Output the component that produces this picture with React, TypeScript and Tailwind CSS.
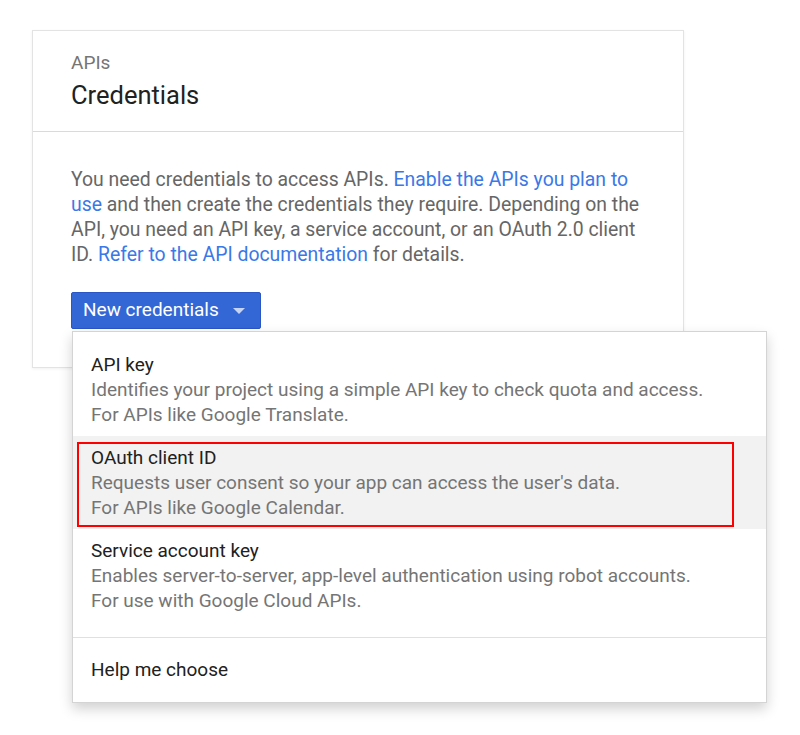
const font = { fontFamily: "Roboto, 'Liberation Sans', sans-serif" };

const options = [
  {
    title: "API key",
    lines: [
      "Identifies your project using a simple API key to check quota and access.",
      "For APIs like Google Translate.",
    ],
    active: false,
  },
  {
    title: "OAuth client ID",
    lines: [
      "Requests user consent so your app can access the user's data.",
      "For APIs like Google Calendar.",
    ],
    active: true,
  },
  {
    title: "Service account key",
    lines: [
      "Enables server-to-server, app-level authentication using robot accounts.",
      "For use with Google Cloud APIs.",
    ],
    active: false,
  },
];

function CredentialsMenu() {
  return (
    <div className="absolute left-px top-[39px] z-10 w-[695px] border border-[#d4d4d4] bg-white shadow-[0_6px_12px_rgba(0,0,0,0.18)]">
      <div className="pt-[11px] pb-[15px]">
        {options.map((o) => (
          <div
            key={o.title}
            className={`relative px-[18px] py-[9px] text-[19px] leading-[25px] ${o.active ? "bg-[#f2f2f2]" : ""}`}
          >
            {o.active && (
              <div className="pointer-events-none absolute left-[4px] top-[6px] h-[85px] w-[657px] border-2 border-[#ff0000]" />
            )}
            <div className="text-[#212121]">{o.title}</div>
            {o.lines.map((l) => (
              <div key={l} className="text-[#757575]">
                {l}
              </div>
            ))}
          </div>
        ))}
      </div>
      <div className="flex h-[65px] items-center border-t border-[#e0e0e0] px-[18px] text-[19px] text-[#212121]">
        Help me choose
      </div>
    </div>
  );
}

export default function App() {
  return (
    <div className="min-h-[735px] w-[800px] bg-white pl-[32px] pt-[30px]" style={font}>
      <div className="w-[652px] border border-[#e3e3e3] bg-white shadow-[0_1px_3px_rgba(0,0,0,0.06)]">
        <div className="border-b border-[#dadada] px-[38px] pb-[20px] pt-[21px]">
          <div className="text-[19px] leading-[22px] text-[#757575]">APIs</div>
          <div className="mt-[5px] text-[25.5px] leading-[32px] text-[#212121]">Credentials</div>
        </div>
        <div className="px-[38px] pb-[38px] pt-[35px]">
          <p className="w-[580px] text-[19.4px] leading-[25px] text-[#666666]">
            You need credentials to access APIs.{" "}
            <span className="text-[#3b78e7]">Enable the APIs you plan to use</span> and then
            create the credentials they require. Depending on the API, you need an API key, a
            service account, or an OAuth 2.0 client ID.{" "}
            <span className="text-[#3b78e7]">Refer to the API documentation</span> for details.
          </p>
          <div className="relative mt-[25px]">
            <button className="flex h-[37px] w-[190px] items-center gap-[14px] rounded-[2px] border border-[#2a56c6] bg-[#3367d6] pl-[11px] text-[19px] text-white">
              New credentials
              <svg width="12" height="6" viewBox="0 0 12 6">
                <path d="M0 0h12L6 6z" fill="#c6d4f3" />
              </svg>
            </button>
            <CredentialsMenu />
          </div>
        </div>
      </div>
    </div>
  );
}
